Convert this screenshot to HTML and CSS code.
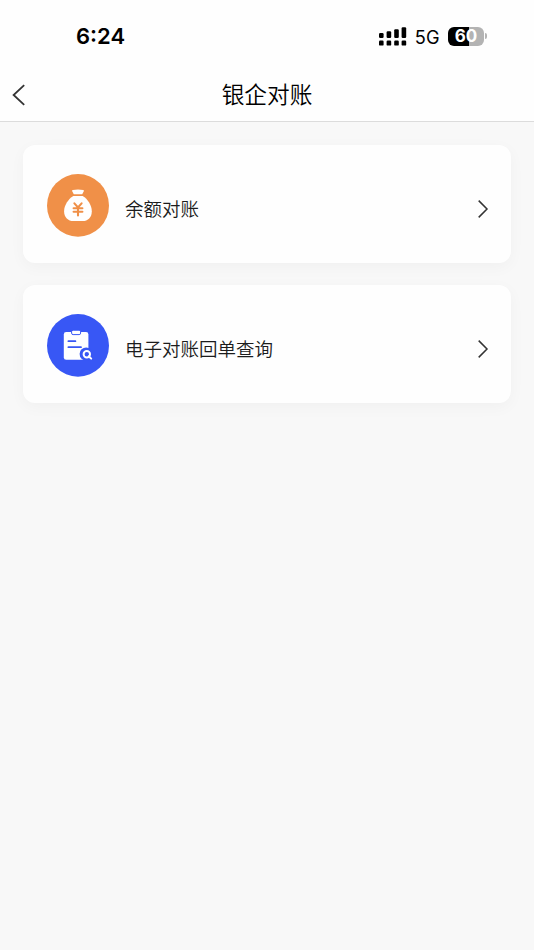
FILE: index.html
```html
<!DOCTYPE html>
<html lang="zh-CN">
<head>
    <meta charset="UTF-8">
    <meta name="viewport" content="width=device-width, initial-scale=1.0">
    <title>银企对账</title>
    <link rel="stylesheet" href="styles.css">
</head>
<body>
    <header class="header">
        <div class="status-bar">
            <span class="time">6:24</span>
            <div class="status-right">
                <svg class="signal" width="28" height="20" viewBox="0 0 28 20">
                    <rect x="0" y="6" width="4.6" height="5" rx="1.2" />
                    <rect x="7.6" y="4.2" width="4.6" height="6.8" rx="1.2" />
                    <rect x="15.2" y="2.3" width="4.6" height="8.7" rx="1.2" />
                    <rect x="22.6" y="0.3" width="4.6" height="10.7" rx="1.2" />
                    <rect x="0" y="13.6" width="4.6" height="5" rx="1.2" />
                    <rect x="7.6" y="13.6" width="4.6" height="5" rx="1.2" />
                    <rect x="15.2" y="13.6" width="4.6" height="5" rx="1.2" />
                    <rect x="22.6" y="13.6" width="4.6" height="5" rx="1.2" />
                </svg>
                <span class="network">5G</span>
                <div class="battery"><span>60</span></div>
                <div class="battery-cap"></div>
            </div>
        </div>
        <div class="nav-bar">
            <a href="#" class="back">
                <svg width="14" height="22" viewBox="0 0 14 22">
                    <path d="M12.2 1.2 L1.6 11 L12.2 20.8" />
                </svg>
            </a>
            <h1>银企对账</h1>
        </div>
    </header>

    <main class="list">
        <a href="#" class="card">
            <svg class="card-icon" width="62" height="63" viewBox="0 0 62 63">
                <ellipse cx="31" cy="31.4" rx="31" ry="31.3" fill="#f09048" />
                <path d="M25.8 16 Q31 14.8 36.2 16 Q37.4 16.3 36.8 17.3 L35.2 20.3 H26.8 L25.2 17.3 Q24.6 16.3 25.8 16 Z" fill="#fff" />
                <path d="M26.3 22.1 H35.7 C40.8 25.2 44.8 31.5 44.8 37.2 C44.8 43.5 41 47 35.5 47 H26.5 C21 47 17.1 43.5 17.1 37.2 C17.1 31.5 21.2 25.2 26.3 22.1 Z" fill="#fff" />
                <path d="M27.4 29.4 L31 33.4 L34.6 29.4 M26.6 34.2 H35.4 M26.6 37.8 H35.4 M31 33.4 V41.4" class="yen" />
            </svg>
            <span class="card-title">余额对账</span>
            <svg class="arrow" width="12" height="20" viewBox="0 0 12 20">
                <path d="M1.7 1.6 L10 10 L1.7 18.4" />
            </svg>
        </a>
        <a href="#" class="card">
            <svg class="card-icon" width="62" height="63" viewBox="0 0 62 63">
                <ellipse cx="31" cy="31.4" rx="31" ry="31.3" fill="#3857f5" />
                <rect x="16.8" y="18" width="24.6" height="27.8" rx="2.4" fill="#fff" />
                <rect x="24.6" y="16.2" width="9" height="4.4" rx="1.5" fill="#fff" stroke="#3857f5" stroke-width="1" />
                <path d="M21.4 27.2 H28.4 M21.4 33.2 H34" class="doc-line" />
                <circle cx="39.2" cy="40" r="6.6" fill="#3857f5" />
                <circle cx="39.8" cy="40.2" r="3.2" class="lens" />
                <path d="M41.8 42.2 L44.2 44.6" class="lens" />
            </svg>
            <span class="card-title">电子对账回单查询</span>
            <svg class="arrow" width="12" height="20" viewBox="0 0 12 20">
                <path d="M1.7 1.6 L10 10 L1.7 18.4" />
            </svg>
        </a>
    </main>
</body>
</html>
```

FILE: styles.css
```css
* {
    margin: 0;
    padding: 0;
    box-sizing: border-box;
}

body {
    min-height: 100vh;
    background: #f8f8f8;
    color: #1c1c1c;
    font-family: "Noto Sans CJK SC", sans-serif;
    font-weight: 350;
}

a {
    color: inherit;
    text-decoration: none;
}

.header {
    height: 122px;
    background: #fefefe;
    border-bottom: 1px solid #dcdcdc;
}

.status-bar {
    display: flex;
    justify-content: space-between;
    height: 68px;
    padding: 4px 47px 0 76px;
    align-items: center;
    font-family: Inter, sans-serif;
    color: #000;
}

.time {
    font-size: 22px;
    font-weight: 600;
}

.status-right {
    display: flex;
    align-items: center;
}

.signal {
    margin-top: 1px;
}

.network {
    margin: 1px 0 0 8px;
    font-size: 18.2px;
    font-weight: 400;
}

.battery {
    display: flex;
    justify-content: center;
    align-items: center;
    width: 36px;
    height: 19px;
    margin-left: 8.5px;
    border-radius: 6px;
    background: linear-gradient(to right, #000 59%, #b3b3b3 59%);
    color: #fff;
    font-size: 17px;
    font-weight: 700;
    line-height: 19px;
}

.battery-cap {
    width: 2px;
    height: 6px;
    margin-left: 1px;
    border-radius: 0 2px 2px 0;
    background: #b3b3b3;
}

.nav-bar {
    display: grid;
    grid-template-columns: 60px 1fr 60px;
    align-items: center;
    height: 53px;
}

.back {
    display: flex;
    padding-left: 12px;
}

.back path,
.arrow path {
    fill: none;
    stroke: #333;
    stroke-width: 1.8;
}

.nav-bar h1 {
    padding-bottom: 2px;
    text-align: center;
    font-size: 22.7px;
    font-weight: 350;
    line-height: 34px;
    color: #000;
}

.list {
    display: flex;
    flex-direction: column;
    gap: 22.5px;
    padding: 23px;
}

.card {
    display: flex;
    align-items: center;
    height: 117.8px;
    padding: 3.4px 22px 0 24px;
    border-radius: 12px;
    background: #fefefe;
    box-shadow: 0 4px 16px rgba(0, 0, 0, 0.035);
}

.card-title {
    flex: 1;
    margin: 5px 0 0 16px;
    font-size: 18.5px;
    line-height: 28px;
}

.arrow {
    margin-top: 7px;
}

.arrow path {
    stroke-width: 1.5;
}

.yen {
    fill: none;
    stroke: #f09048;
    stroke-width: 2.1;
    stroke-linecap: round;
}

.doc-line {
    stroke: #3857f5;
    stroke-width: 1.8;
    stroke-linecap: round;
}

.lens {
    fill: none;
    stroke: #fff;
    stroke-width: 2;
    stroke-linecap: round;
}
```
